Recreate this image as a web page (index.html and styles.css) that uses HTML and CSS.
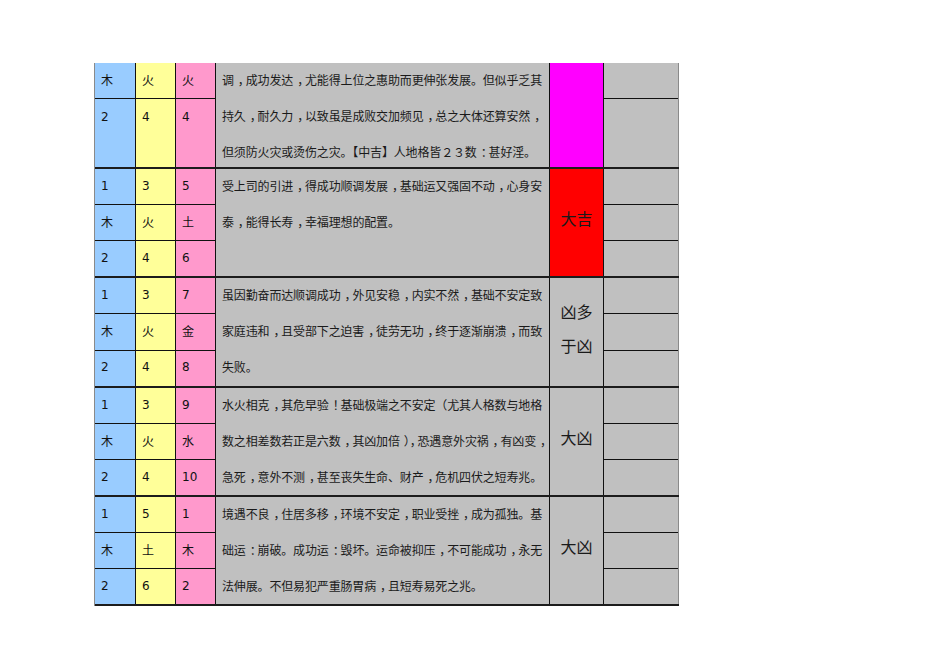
FILE: index.html
```html
<!DOCTYPE html>
<html lang="zh-CN">
<head>
<meta charset="utf-8">
<title>数理表</title>
<link rel="stylesheet" href="styles.css">
</head>
<body>
<div class="sheet">
  <div class="block first">
    <div class="col c-blue"><div class="cell top">木</div><div class="cell tall">2</div></div>
    <div class="col c-yellow"><div class="cell top">火</div><div class="cell tall">4</div></div>
    <div class="col c-pink"><div class="cell top">火</div><div class="cell tall">4</div></div>
    <div class="desc">
      <div class="line">调<span class="p">，</span>成功发达<span class="p">，</span>尤能得上位之惠助而更伸张发展。但似乎乏其</div>
      <div class="line">持久<span class="p">，</span>耐久力<span class="p">，</span>以致虽是成败交加频见<span class="p">，</span>总之大体还算安然<span class="p">，</span></div>
      <div class="line">但须防火灾或烫伤之灾。【中吉】人地格皆２３数<span class="p">：</span>甚好淫。</div>
    </div>
    <div class="res magenta"></div>
    <div class="col c-last"><div class="cell top"></div><div class="cell tall"></div></div>
  </div>

  <div class="block">
    <div class="col c-blue"><div class="cell">1</div><div class="cell">木</div><div class="cell">2</div></div>
    <div class="col c-yellow"><div class="cell">3</div><div class="cell">火</div><div class="cell">4</div></div>
    <div class="col c-pink"><div class="cell">5</div><div class="cell">土</div><div class="cell">6</div></div>
    <div class="desc">
      <div class="line">受上司的引进<span class="p">，</span>得成功顺调发展<span class="p">，</span>基础运又强固不动<span class="p">，</span>心身安</div>
      <div class="line">泰<span class="p">，</span>能得长寿<span class="p">，</span>幸福理想的配置。</div>
    </div>
    <div class="res red">大吉</div>
    <div class="col c-last"><div class="cell"></div><div class="cell"></div><div class="cell"></div></div>
  </div>

  <div class="block b3">
    <div class="col c-blue"><div class="cell">1</div><div class="cell">木</div><div class="cell">2</div></div>
    <div class="col c-yellow"><div class="cell">3</div><div class="cell">火</div><div class="cell">4</div></div>
    <div class="col c-pink"><div class="cell">7</div><div class="cell">金</div><div class="cell">8</div></div>
    <div class="desc">
      <div class="line">虽因勤奋而达顺调成功<span class="p">，</span>外见安稳<span class="p">，</span>内实不然<span class="p">，</span>基础不安定致</div>
      <div class="line">家庭违和<span class="p">，</span>且受部下之迫害<span class="p">，</span>徒劳无功<span class="p">，</span>终于逐渐崩溃<span class="p">，</span>而致</div>
      <div class="line">失败。</div>
    </div>
    <div class="res gray two">凶多<br>于凶</div>
    <div class="col c-last"><div class="cell"></div><div class="cell"></div><div class="cell"></div></div>
  </div>

  <div class="block">
    <div class="col c-blue"><div class="cell">1</div><div class="cell">木</div><div class="cell">2</div></div>
    <div class="col c-yellow"><div class="cell">3</div><div class="cell">火</div><div class="cell">4</div></div>
    <div class="col c-pink"><div class="cell">9</div><div class="cell">水</div><div class="cell">10</div></div>
    <div class="desc">
      <div class="line">水火相克<span class="p">，</span>其危早验<span class="p">！</span>基础极端之不安定（尤其人格数与地格</div>
      <div class="line">数之相差数若正是六数<span class="p">，</span>其凶加倍<span class="p">）</span><span class="p">，</span>恐遇意外灾祸<span class="p">，</span>有凶变<span class="p">，</span></div>
      <div class="line">急死<span class="p">，</span>意外不测<span class="p">，</span>甚至丧失生命、财产<span class="p">，</span>危机四伏之短寿兆。</div>
    </div>
    <div class="res gray">大凶</div>
    <div class="col c-last"><div class="cell"></div><div class="cell"></div><div class="cell"></div></div>
  </div>

  <div class="block">
    <div class="col c-blue"><div class="cell">1</div><div class="cell">木</div><div class="cell">2</div></div>
    <div class="col c-yellow"><div class="cell">5</div><div class="cell">土</div><div class="cell">6</div></div>
    <div class="col c-pink"><div class="cell">1</div><div class="cell">木</div><div class="cell">2</div></div>
    <div class="desc">
      <div class="line">境遇不良<span class="p">，</span>住居多移<span class="p">，</span>环境不安定<span class="p">，</span>职业受挫<span class="p">，</span>成为孤独。基</div>
      <div class="line">础运<span class="p">：</span>崩破。成功运<span class="p">：</span>毁坏。运命被抑压<span class="p">，</span>不可能成功<span class="p">，</span>永无</div>
      <div class="line">法伸展。不但易犯严重肠胃病<span class="p">，</span>且短寿易死之兆。</div>
    </div>
    <div class="res gray">大凶</div>
    <div class="col c-last"><div class="cell"></div><div class="cell"></div><div class="cell"></div></div>
  </div>
</div>
</body>
</html>
```

FILE: styles.css
```css
html, body {
  margin: 0;
  padding: 0;
  background: #ffffff;
}

body {
  font-family: "DejaVu Sans", "Noto Sans CJK SC", sans-serif;
  color: #111;
}

.sheet {
  margin: 63px 0 0 94px;
  width: 585px;
  border-left: 1px solid #8a8a8a;
  box-sizing: border-box;
}

.block {
  display: flex;
  height: 109px;
  border-bottom: 2px solid #1c1c1c;
  box-sizing: border-box;
}

.block.first {
  height: 106px;
}

.block.b3 {
  height: 110px;
}

.col {
  display: flex;
  flex-direction: column;
  border-right: 1px solid #111;
  box-sizing: border-box;
}

.c-blue { width: 41px; background: #99ccff; }
.c-yellow { width: 40px; background: #ffff99; }
.c-pink { width: 40px; background: #ff99cc; }
.c-last { width: 75px; background: #c0c0c0; border-right-color: #8a8a8a; }

.cell {
  flex: 1 1 0;
  display: flex;
  align-items: center;
  padding: 0 0 2px 6px;
  border-bottom: 1px solid #111;
  font-size: 12px;
  font-family: "DejaVu Sans", "Noto Sans CJK SC", sans-serif;
}

.cell.top {
  flex: 0 0 36px;
  box-sizing: border-box;
}

.cell.tall {
  flex: 1 1 0;
  align-items: flex-start;
  padding-top: 11px;
}

.cell:last-child {
  border-bottom: none;
}

.desc {
  width: 334px;
  background: #c0c0c0;
  border-right: 1px solid #111;
  box-sizing: border-box;
  padding-left: 6px;
  font-family: "Noto Sans CJK SC", sans-serif;
  font-size: 12px;
  letter-spacing: -0.15px;
  color: #1a1a1a;
}

.line {
  height: 36.2px;
  line-height: 34px;
  white-space: nowrap;
}

.p {
  margin-left: 4px;
  letter-spacing: -4.15px;
}

.res {
  width: 54px;
  box-sizing: border-box;
  border-right: 1px solid #111;
  display: flex;
  align-items: center;
  justify-content: center;
  text-align: center;
  padding-bottom: 9px;
  font-family: "Noto Sans CJK SC", sans-serif;
  font-size: 16px;
  color: #1a1a1a;
}

.res.two {
  line-height: 34px;
  padding-bottom: 8px;
}

.magenta { background: #ff00ff; }
.red { background: #ff0000; }
.gray { background: #c0c0c0; }
```
